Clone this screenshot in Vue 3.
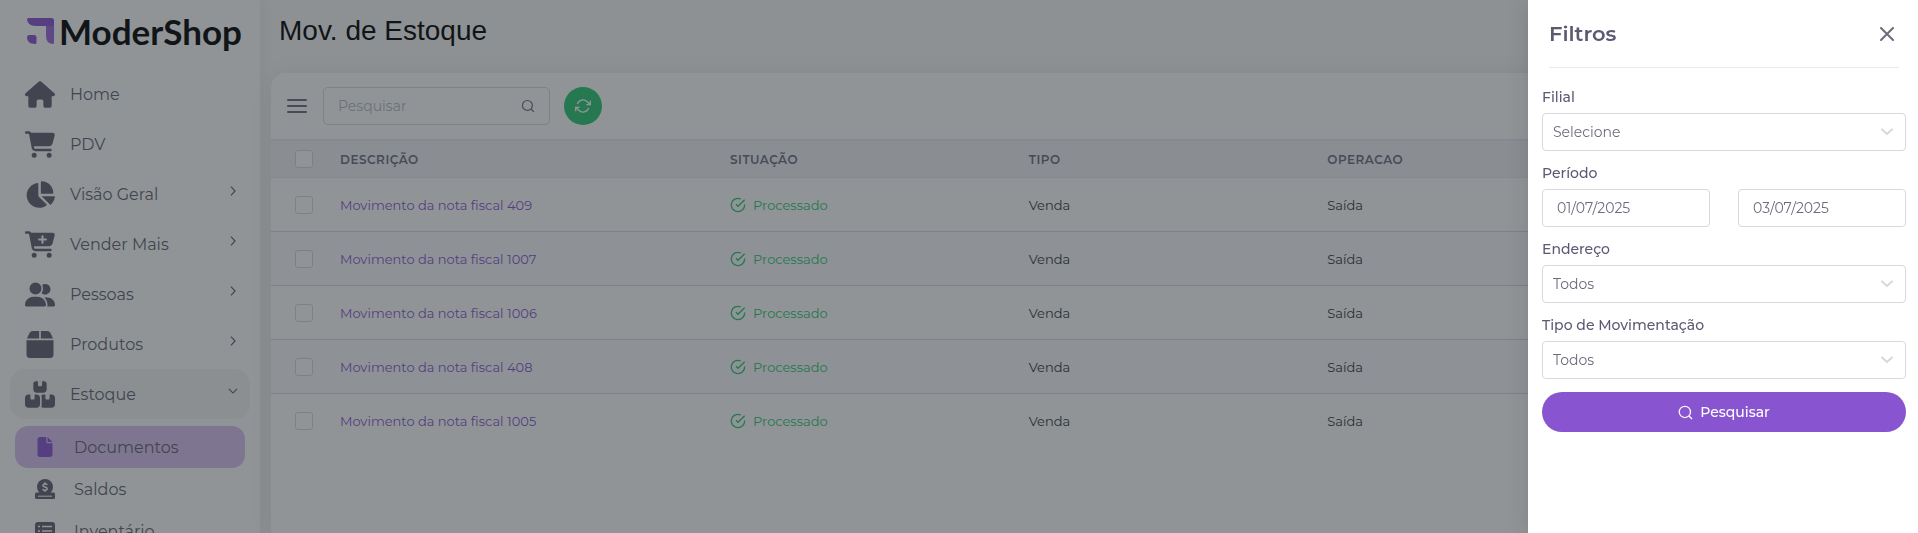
<script setup>
import { ref } from 'vue'

const cart = 'M0 24C0 10.7 10.7 0 24 0H69.5c22 0 41.5 12.8 50.6 32h411c26.3 0 45.5 25 38.6 50.4l-41 152.3c-8.5 31.4-37 53.3-69.5 53.3H170.7l5.4 28.5c2.2 11.3 12.1 19.5 23.6 19.5H488c13.3 0 24 10.7 24 24s-10.7 24-24 24H199.7c-34.6 0-64.3-24.6-70.7-58.5L77.4 54.5c-.7-3.8-4-6.5-7.9-6.5H24C10.7 48 0 37.3 0 24zM128 464a48 48 0 1 1 96 0 48 48 0 1 1 -96 0zm336-48a48 48 0 1 1 0 96 48 48 0 1 1 0-96z'

const menu = [
  { label: 'Home', box: '0 0 576 512', d: 'M575.8 255.5c0 18-15 32.1-32 32.1h-32l.7 160.2c0 2.7-.2 5.4-.5 8.1V472c0 22.1-17.9 40-40 40H456c-1.1 0-2.2 0-3.3-.1c-1.4 .1-2.8 .1-4.2 .1H416 392c-22.1 0-40-17.9-40-40V448 384c0-17.7-14.3-32-32-32H256c-17.7 0-32 14.3-32 32v64 24c0 22.1-17.9 40-40 40H160 128.1c-1.5 0-3-.1-4.5-.2c-1.2 .1-2.4 .2-3.6 .2H104c-22.1 0-40-17.9-40-40V360c0-.9 0-1.9 .1-2.8V287.6H32c-18 0-32-14-32-32.1c0-9 3-17 10-24L266.4 8c7-7 15-8 22-8s15 2 21 7L564.8 231.5c8 7 12 15 11 24z' },
  { label: 'PDV', box: '0 0 576 512', d: cart },
  { label: 'Visão Geral', box: '0 0 576 512', sub: true, d: 'M304 240V16.6c0-9 7-16.6 16-16.6C443.7 0 544 100.3 544 224c0 9-7.6 16-16.6 16H304zM32 272C32 150.7 122.1 50.3 239 34.3c9.2-1.3 17 6.1 17 15.4V288L412.5 444.5c6.7 6.7 6.2 17.7-1.5 23.1C371.8 495.6 323.8 512 272 512C139.5 512 32 404.6 32 272zm526.4 16c9.3 0 16.6 7.8 15.4 17c-7.7 55.9-34.6 105.6-73.9 142.3c-6 5.6-15.4 5.2-21.2-.7L320 288H558.4z' },
  { label: 'Vender Mais', box: '0 0 576 512', sub: true, d: cart + 'M252 160c0 11 9 20 20 20h44v44c0 11 9 20 20 20s20-9 20-20V180h44c11 0 20-9 20-20s-9-20-20-20H356V96c0-11-9-20-20-20s-20 9-20 20v44H272c-11 0-20 9-20 20z' },
  { label: 'Pessoas', box: '0 0 640 512', sub: true, d: 'M96 128a128 128 0 1 1 256 0A128 128 0 1 1 96 128zM0 482.3C0 383.8 79.8 304 178.3 304h91.4C368.2 304 448 383.8 448 482.3c0 16.4-13.3 29.7-29.7 29.7H29.7C13.3 512 0 498.7 0 482.3zM609.3 512H471.4c5.4-9.4 8.6-20.3 8.6-32v-8c0-60.7-27.1-115.2-69.8-151.8c2.4-.1 4.7-.2 7.1-.2h61.4C567.8 320 640 392.2 640 481.3c0 17-13.8 30.7-30.7 30.7zM432 256c-31 0-59-12.6-79.3-32.9C372.4 196.5 384 163.6 384 128c0-26.8-6.6-52.1-18.3-74.3C384.3 40.1 407.2 32 432 32c61.9 0 112 50.1 112 112s-50.1 112-112 112z' },
  { label: 'Produtos', box: '0 0 512 512', sub: true, d: 'M58 37.9C69.3 14.7 92.5 0 118.3 0H240V144H8.1zM272 0H393.7c25.8 0 49 14.7 60.3 37.9L503.900 144H272zM0 176H512V448c0 35.3-28.7 64-64 64H64c-35.3 0-64-28.7-64-64z' },
  { label: 'Estoque', box: '0 0 576 512', sub: true, open: true, d: 'M248 0H208c-26.5 0-48 21.5-48 48V160c0 35.3 28.7 64 64 64H352c35.3 0 64-28.7 64-64V48c0-26.5-21.5-48-48-48H328V80c0 8.8-7.2 16-16 16H264c-8.8 0-16-7.2-16-16V0zM64 256c-35.3 0-64 28.7-64 64V448c0 35.3 28.7 64 64 64H224c35.3 0 64-28.7 64-64V320c0-35.3-28.7-64-64-64H184v80c0 8.8-7.2 16-16 16H120c-8.8 0-16-7.2-16-16V256H64zM352 512H512c35.3 0 64-28.7 64-64V320c0-35.3-28.7-64-64-64H472v80c0 8.8-7.2 16-16 16H408c-8.8 0-16-7.2-16-16V256H352c-15 0-28.8 5.1-39.7 13.8c4.9 10.4 7.7 22 7.7 34.2V464c0 12.2-2.8 23.8-7.7 34.2C323.2 506.9 337 512 352 512z' }
]

const rows = ['409', '1007', '1006', '408', '1005']

const filial = ref('Selecione')
const endereco = ref('Todos')
const tipo = ref('Todos')
const inicio = ref('01/07/2025')
const fim = ref('03/07/2025')
const busca = ref('')
</script>

<template>
  <div class="shell">
    <aside class="sidebar">
      <a class="brand" href="#">
        <svg width="27" height="26" viewBox="0 0 27 26" aria-hidden="true">
          <path d="M1.500 0H24.500Q27 0 27 2.500V8H8Q1 8 0 1.500Q0 0 1.500 0Z" fill="#8854d0" />
          <path d="M19 8H27V24.500Q27 26 25.500 26Q19 25 19 18Z" fill="#9b68dc" />
          <path d="M2.500 17H7Q9.500 17 9.500 19.500V24.500Q9.500 26 8 26Q0 25.500 0 19.500Q0 17 2.500 17Z" fill="#8854d0" />
        </svg>
        <span>ModerShop</span>
      </a>
      <nav class="menu">
        <a v-for="m in menu" :key="m.label" class="item" :class="{ open: m.open }" href="#">
          <span class="icon"><svg :viewBox="m.box" aria-hidden="true"><path :d="m.d" fill-rule="evenodd" /></svg></span>
          <span class="label">{{ m.label }}</span>
          <svg v-if="m.sub" class="arrow" viewBox="0 0 24 24" aria-hidden="true">
            <path :d="m.open ? 'M5 8.500l7 7 7-7' : 'M8.500 4.500l7 7.500-7 7.500'" />
          </svg>
        </a>
        <a class="subitem active" href="#">
          <span class="subicon"><svg viewBox="0 0 384 512" aria-hidden="true"><path d="M0 64C0 28.700 28.700 0 64 0H224V128c0 17.700 14.300 32 32 32H384V448c0 35.300-28.700 64-64 64H64c-35.300 0-64-28.700-64-64V64zm384 64H256V0L384 128z" /></svg></span>
          <span>Documentos</span>
        </a>
        <a class="subitem" href="#">
          <span class="subicon">
            <svg viewBox="0 0 20 20" aria-hidden="true">
              <path d="M1.500 13.500H18.500A1.500 1.500 0 0 1 20 15V18.500A1.500 1.500 0 0 1 18.500 20H1.500A1.500 1.500 0 0 1 0 18.500V15A1.500 1.500 0 0 1 1.500 13.500Z" />
              <circle cx="10" cy="8" r="8" />
              <path class="cut" d="M12.400 5.800C11.600 5 8 4.500 7.900 6.500 7.900 8.300 12.300 7.600 12.300 9.800 12.200 11.600 8.700 11.400 7.600 10.400M10 3.300v1.600M10 11.200v1.600" />
              <path class="cut slot" d="M3 17.200H17" />
            </svg>
          </span>
          <span>Saldos</span>
        </a>
        <a class="subitem" href="#">
          <span class="subicon">
            <svg viewBox="0 0 20 18" aria-hidden="true">
              <rect width="20" height="18" rx="3" />
              <path class="cut" d="M3 4.500h2M7 4.500h10M3 9h2M7 9h10M3 13.500h2M7 13.500h10" />
            </svg>
          </span>
          <span>Inventário</span>
        </a>
      </nav>
    </aside>

    <main class="content">
      <h1>Mov. de Estoque</h1>
      <section class="card">
        <div class="toolbar">
          <button class="burger" type="button" aria-label="Menu"><i></i><i></i><i></i></button>
          <div class="search">
            <input v-model="busca" type="text" placeholder="Pesquisar" aria-label="Pesquisar" />
            <svg viewBox="0 0 24 24" aria-hidden="true"><circle cx="11" cy="11" r="8.500" /><path d="M22 22l-4.800-4.800" /></svg>
          </div>
          <button class="refresh" type="button" aria-label="Atualizar">
            <svg viewBox="0 0 24 24" aria-hidden="true"><path d="M23 4v6h-6M1 20v-6h6M3.500 9a9 9 0 0 1 14.900-3.400L23 10M1 14l4.600 4.400A9 9 0 0 0 20.500 15" /></svg>
          </button>
        </div>
        <table>
          <colgroup><col class="c-check" /><col class="c-desc" /><col class="c-mid" /><col class="c-mid" /><col /></colgroup>
          <thead>
            <tr>
              <th class="check"><input type="checkbox" aria-label="Selecionar todos" /></th>
              <th>Descrição</th><th>Situação</th><th>Tipo</th><th>Operacao</th>
            </tr>
          </thead>
          <tbody>
            <tr v-for="r in rows" :key="r">
              <td class="check"><input type="checkbox" :aria-label="'Selecionar ' + r" /></td>
              <td><a href="#">Movimento da nota fiscal {{ r }}</a></td>
              <td>
                <span class="status">
                  <svg viewBox="0 0 24 24" aria-hidden="true"><path d="M22 11.100V12a10 10 0 1 1-5.900-9.100M22 4L12 14l-3-3" /></svg>
                  Processado
                </span>
              </td>
              <td>Venda</td>
              <td>Saída</td>
            </tr>
          </tbody>
        </table>
      </section>
    </main>

    <div class="backdrop"></div>

    <aside class="drawer">
      <header>
        <h2>Filtros</h2>
        <button type="button" aria-label="Fechar"><svg viewBox="0 0 14 14" aria-hidden="true"><path d="M1 1l12 12M13 1L1 13" /></svg></button>
      </header>
      <form @submit.prevent>
        <label for="filial">Filial</label>
        <div class="select">
          <select id="filial" v-model="filial"><option>Selecione</option></select>
          <svg viewBox="0 0 12 8" aria-hidden="true"><path d="M1 1.500l5 4.500 5-4.500" /></svg>
        </div>
        <label for="inicio">Período</label>
        <div class="period">
          <input id="inicio" v-model="inicio" type="text" />
          <input v-model="fim" type="text" aria-label="Fim do período" />
        </div>
        <label for="endereco">Endereço</label>
        <div class="select">
          <select id="endereco" v-model="endereco"><option>Todos</option></select>
          <svg viewBox="0 0 12 8" aria-hidden="true"><path d="M1 1.500l5 4.500 5-4.500" /></svg>
        </div>
        <label for="tipo">Tipo de Movimentação</label>
        <div class="select">
          <select id="tipo" v-model="tipo"><option>Todos</option></select>
          <svg viewBox="0 0 12 8" aria-hidden="true"><path d="M1 1.500l5 4.500 5-4.500" /></svg>
        </div>
        <button class="submit" type="submit">
          <svg viewBox="0 0 24 24" aria-hidden="true"><circle cx="11" cy="11" r="9" /><path d="M22.500 22.500l-5-5" /></svg>
          Pesquisar
        </button>
      </form>
    </aside>
  </div>
</template>

<style>
body {
  margin: 0;
  background: #f8f8f8;
}
</style>

<style scoped>
* {
  box-sizing: border-box;
}
.shell {
  display: flex;
  height: 100vh;
  overflow: hidden;
  background: #f8f8f8;
  color: #6e6b7b;
  font-family: Montserrat, Inter, "Liberation Sans", sans-serif;
  font-size: 14px;
}
a {
  text-decoration: none;
}
button,
input,
select {
  font: inherit;
  color: inherit;
}
button {
  border: 0;
  padding: 0;
  background: none;
}

.sidebar {
  flex: none;
  width: 260px;
  background: #fff;
  box-shadow: 0 0 15px rgba(34, 41, 47, 0.08);
  overflow: hidden;
}
.brand {
  display: flex;
  align-items: center;
  gap: 5px;
  height: 62px;
  padding-left: 27px;
  color: #000;
  font-family: Lato, "Liberation Sans", sans-serif;
  font-size: 35px;
  font-weight: 700;
}
.menu {
  display: flex;
  flex-direction: column;
  padding: 7px 10px 0;
}
.item {
  display: flex;
  align-items: center;
  height: 50px;
  padding: 0 10px 0 15px;
  border-radius: 15px;
  color: #625f6e;
  font-size: 16px;
}
.item.open {
  background: #f4f4f4;
  margin-bottom: 7px;
}
.icon {
  display: flex;
  width: 30px;
  height: 27px;
  margin-right: 15px;
}
.icon svg,
.subicon svg {
  width: 100%;
  height: 100%;
  fill: #625f6e;
}
.label {
  flex: 1;
}
.arrow {
  width: 14px;
  height: 14px;
  margin-bottom: 6px;
  fill: none;
  stroke: #625f6e;
  stroke-width: 2;
}
.subitem {
  display: flex;
  align-items: center;
  gap: 19px;
  height: 42px;
  margin: 0 5px;
  padding-left: 20px;
  border-radius: 13px;
  color: #625f6e;
  font-size: 16px;
}
.subicon {
  display: flex;
  width: 20px;
  height: 20px;
}
.subitem.active {
  background: #dac3f1;
}
.subitem.active svg {
  fill: #8854d0;
}
.subicon .cut {
  fill: none;
  stroke: #fff;
  stroke-width: 1.500;
}
.subicon .slot {
  stroke-width: 1;
}

.content {
  flex: 1;
  min-width: 0;
  display: flex;
  flex-direction: column;
  padding: 0 15px 0 11px;
}
h1 {
  margin: 15px 0 26px 8px;
  color: #000;
  font: 400 28px/32px "Liberation Sans", Arial, sans-serif;
}
.card {
  flex: 1;
  background: #fff;
  border-radius: 15px 15px 0 0;
  box-shadow: 0 4px 24px rgba(34, 41, 47, 0.1);
}
.toolbar {
  display: flex;
  align-items: center;
  height: 66px;
  padding: 0 16px;
}
.burger {
  display: flex;
  flex-direction: column;
  gap: 4px;
  width: 20px;
  margin-right: 16px;
}
.burger i {
  height: 2px;
  background: #6e6b7b;
  border-radius: 1px;
}
.search {
  display: flex;
  align-items: center;
  width: 227px;
  height: 38px;
  margin-right: 14px;
  padding: 0 14px;
  border: 1px solid #d8d6de;
  border-radius: 5px;
}
.search input {
  flex: 1;
  min-width: 0;
  padding: 0;
  border: 0;
  outline: 0;
  background: none;
}
.search input::placeholder {
  color: #b9b9c3;
}
.search svg {
  width: 14px;
  height: 14px;
  fill: none;
  stroke: #6e6b7b;
  stroke-width: 2;
}
.refresh {
  display: grid;
  place-items: center;
  width: 38px;
  height: 38px;
  border-radius: 50%;
  background: #28c76f;
}
.refresh svg {
  width: 16px;
  height: 16px;
  fill: none;
  stroke: #fff;
  stroke-width: 2;
}
table {
  width: 100%;
  table-layout: fixed;
  border-collapse: separate;
  border-spacing: 0;
}
.c-check {
  width: 45px;
}
.c-desc {
  width: 23.9%;
}
.c-mid {
  width: 18.3%;
}
th {
  height: 39px;
  padding: 0 24px;
  border-top: 2px solid #ebe9f1;
  border-bottom: 1px solid #ebe9f1;
  background: #f3f2f7;
  color: #6e6b7b;
  font-size: 12px;
  font-weight: 600;
  letter-spacing: 0.5px;
  text-align: left;
  text-transform: uppercase;
}
td {
  height: 54px;
  padding: 0 24px;
  border-bottom: 1px solid #d8d6de;
  color: #333;
  font-size: 13px;
}
tr:last-child td {
  border-bottom: 0;
}
tbody tr:nth-child(even) td {
  background: #fafafc;
}
td a {
  color: #8854d0;
}
.check {
  padding: 0 0 0 24px;
}
.check input {
  appearance: none;
  display: block;
  width: 18px;
  height: 18px;
  margin: 0;
  border: 1px solid #d8d6de;
  border-radius: 3px;
  background: #fff;
}
.status {
  display: flex;
  align-items: center;
  gap: 7px;
  color: #28c76f;
}
.status svg {
  width: 16px;
  height: 16px;
  fill: none;
  stroke: #28c76f;
  stroke-width: 2;
}

.backdrop {
  position: fixed;
  inset: 0;
  background: rgba(34, 41, 47, 0.5);
}
.drawer {
  position: fixed;
  inset: 0 0 0 auto;
  width: 390px;
  background: #fff;
  box-shadow: 0 0 20px rgba(34, 41, 47, 0.15);
}
.drawer header {
  display: flex;
  align-items: center;
  justify-content: space-between;
  height: 68px;
  margin: 0 19px 0 21px;
  padding-right: 5px;
  border-bottom: 1px solid #ebe9f1;
}
h2 {
  margin: 0;
  color: #5e5873;
  font-size: 21px;
  font-weight: 600;
}
.drawer header button,
.drawer header svg {
  display: block;
  width: 14px;
  height: 14px;
  fill: none;
  stroke: #6e6b7b;
  stroke-width: 2;
  stroke-linecap: round;
}
form {
  display: flex;
  flex-direction: column;
  padding: 14px 12px 0 14px;
}
label {
  height: 31px;
  color: #5e5873;
  font-weight: 500;
  line-height: 30px;
}
.select,
.period {
  display: grid;
  margin-bottom: 7px;
}
.select {
  grid-template-columns: 1fr;
  align-items: center;
}
.select select,
.select svg {
  grid-area: 1 / 1;
}
.select svg {
  width: 12px;
  height: 8px;
  margin-right: 13px;
  justify-self: end;
  pointer-events: none;
  fill: none;
  stroke: #d8d6de;
  stroke-width: 2;
  stroke-linecap: round;
}
select,
.period input {
  appearance: none;
  width: 100%;
  min-width: 0;
  height: 38px;
  margin: 0;
  border: 1px solid #d8d6de;
  border-radius: 4px;
  background: #fff;
  padding: 0 10px;
}
.period {
  grid-template-columns: 1fr 1fr;
  gap: 28px;
}
.period input {
  padding: 0 14px;
}
.submit {
  display: flex;
  align-items: center;
  justify-content: center;
  gap: 7px;
  height: 40px;
  margin-top: 6px;
  border-radius: 20px;
  background: #8854d0;
  color: #fff;
  font-weight: 500;
}
.submit svg {
  width: 15px;
  height: 15px;
  fill: none;
  stroke: #fff;
  stroke-width: 2;
}
</style>
